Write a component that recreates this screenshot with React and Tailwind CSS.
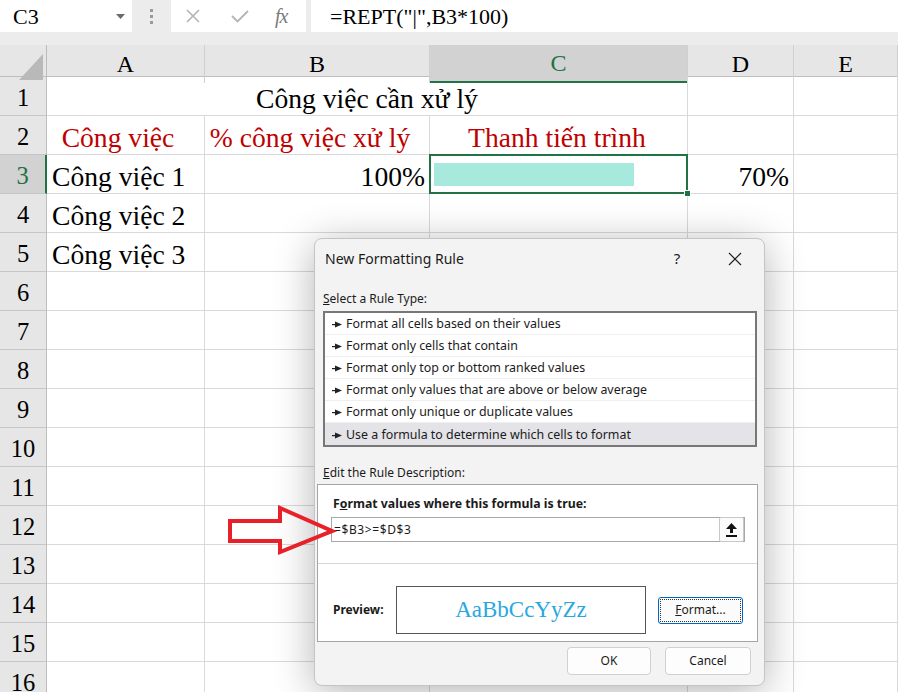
import React from "react";

const serif = { fontFamily: '"Liberation Serif", "Times New Roman", serif' };
const ui = { fontFamily: '"Noto Sans", "Open Sans", sans-serif' };

const rules = [
  "Format all cells based on their values",
  "Format only cells that contain",
  "Format only top or bottom ranked values",
  "Format only values that are above or below average",
  "Format only unique or duplicate values",
  "Use a formula to determine which cells to format",
];

const cols = ["A", "B", "C", "D", "E"];

const Pointer = () => (
  <svg width="10" height="7" viewBox="0 0 10 7" className="shrink-0">
    <rect x="0" y="3" width="4" height="1.2" fill="#222" />
    <polygon points="3,0.5 10,3.5 3,6.5" fill="#222" />
  </svg>
);

const Cell = ({ className = "", children }) => (
  <div
    className={
      "border-r border-b border-[#d9d9d9] flex items-center pt-[5px] overflow-visible whitespace-nowrap text-[27.6px] " +
      className
    }
  >
    {children}
  </div>
);

const RowHeader = ({ n, active }) => (
  <div
    className={
      "flex items-center justify-center pt-[5px] border-b border-[#c6c6c6] text-[24.5px] " +
      (active
        ? "bg-[#d2d2d2] text-[#217346] border-r-2 border-r-[#217346]"
        : "bg-[#e6e6e6] text-black border-r border-r-[#bdbdbd]")
    }
  >
    {n}
  </div>
);

function Sheet() {
  const rows = [];
  for (let r = 1; r <= 16; r++) {
    rows.push(<RowHeader key={"h" + r} n={r} active={r === 3} />);
    if (r === 1) {
      rows.push(
        <Cell key="m1" className="col-span-3 justify-center text-black">
          Công việc cần xử lý
        </Cell>
      );
      rows.push(<Cell key="d1" />);
      rows.push(<Cell key="e1" />);
    } else if (r === 2) {
      rows.push(
        <Cell key="a2" className="justify-center pr-[15px] text-[#c00000]">
          Công việc
        </Cell>
      );
      rows.push(
        <Cell key="b2" className="justify-center pr-[14px] text-[#c00000]">
          % công việc xử lý
        </Cell>
      );
      rows.push(
        <Cell key="c2" className="justify-center pr-[3px] text-[#c00000]">
          Thanh tiến trình
        </Cell>
      );
      rows.push(<Cell key="d2" />);
      rows.push(<Cell key="e2" />);
    } else if (r === 3) {
      rows.push(
        <Cell key="a3" className="pl-[5px] text-black">
          Công việc 1
        </Cell>
      );
      rows.push(
        <Cell key="b3" className="justify-end pr-[4px] text-black">
          100%
        </Cell>
      );
      rows.push(
        <div key="c3" className="relative border-r border-b border-[#d9d9d9] flex items-center pl-[4px] pt-[1px]">
          <div className="w-[200px] h-[23px] bg-[#a7e9dc]" />
          <div className="absolute -left-[1px] -top-[1px] -right-[1px] -bottom-[1px] border-2 border-[#217346]" />
          <div className="absolute -right-[4px] -bottom-[4px] w-[7px] h-[7px] bg-[#217346] border border-white" />
        </div>
      );
      rows.push(
        <Cell key="d3" className="justify-end pr-[4px] text-black">
          70%
        </Cell>
      );
      rows.push(<Cell key="e3" />);
    } else {
      const label = r === 4 ? "Công việc 2" : r === 5 ? "Công việc 3" : "";
      rows.push(
        <Cell key={"a" + r} className="pl-[5px] text-black">
          {label}
        </Cell>
      );
      for (let c = 1; c < 5; c++) rows.push(<Cell key={r + "-" + c} />);
    }
  }
  return (
    <div className="grid grid-cols-[47px_158px_225px_258px_106px_104px] auto-rows-[39px]" style={serif}>
      {rows}
    </div>
  );
}

function FormulaBar() {
  return (
    <div className="h-[45px] bg-[#ececec] flex items-start" style={serif}>
      <div className="w-[132px] h-[32px] bg-white flex items-center pl-[13px] pr-[7px] text-[22px] text-black">
        <span>C3</span>
        <svg width="9" height="5" viewBox="0 0 9 5" className="ml-auto">
          <polygon points="0,0 9,0 4.5,5" fill="#6b6b6b" />
        </svg>
      </div>
      <div className="w-[39px] h-[32px] flex items-center justify-center">
        <div className="flex flex-col gap-[3px]">
          <span className="w-[3px] h-[3px] bg-[#9a9a9a]" />
          <span className="w-[3px] h-[3px] bg-[#9a9a9a]" />
          <span className="w-[3px] h-[3px] bg-[#9a9a9a]" />
        </div>
      </div>
      <div className="w-[135px] h-[32px] bg-white flex items-center">
        <svg width="16" height="16" viewBox="0 0 16 16" className="ml-[14px]">
          <path d="M2 2 L14 14 M14 2 L2 14" stroke="#b4b4b4" strokeWidth="1.6" />
        </svg>
        <svg width="18" height="14" viewBox="0 0 18 14" className="ml-[30px]">
          <path d="M1 7 L6.5 12.5 L17 2" stroke="#b4b4b4" strokeWidth="1.8" fill="none" />
        </svg>
        <span className="ml-[26px] italic text-[20px] text-[#7a7a7a] tracking-[-1px]">fx</span>
      </div>
      <div className="ml-[5px] flex-1 h-[32px] bg-white flex items-center pl-[19px] text-[22px] text-black">
        =REPT("|",B3*100)
      </div>
    </div>
  );
}

function HeaderRow() {
  return (
    <div className="grid grid-cols-[47px_158px_225px_258px_106px_104px] h-[32px] bg-[#e6e6e6] border-b border-[#bdbdbd]" style={serif}>
      <div className="relative border-r border-[#bdbdbd]">
        <svg width="24" height="26" viewBox="0 0 24 26" className="absolute right-[3px] bottom-[3px]">
          <polygon points="24,0 24,26 0,26" fill="#b9b9b9" />
        </svg>
      </div>
      {cols.map((c) => (
        <div
          key={c}
          className={
            "flex items-center justify-center text-[24px] border-r border-[#d0d0d0] " +
            (c === "C" ? "bg-[#d2d2d2] text-[#217346] border-b-2 border-b-[#217346]" : "text-black")
          }
        >
          {c}
        </div>
      ))}
    </div>
  );
}

function Dialog() {
  return (
    <div
      className="absolute left-[314px] top-[238px] w-[451px] h-[448px] rounded-[8px] border border-[#c4c4c4] bg-[#f3f3f3] shadow-[0_6px_40px_rgba(0,0,0,0.3)] flex flex-col text-[#1b1b1b]"
      style={ui}
    >
      <div className="h-[39px] flex items-center pl-[10px] pr-[17px]">
        <span className="text-[14px]">New Formatting Rule</span>
        <span className="ml-auto w-[24px] text-center text-[15px]">?</span>
        <svg width="24" height="14" viewBox="0 0 24 14" className="ml-[34px]">
          <path d="M6 1 L18 13 M18 1 L6 13" stroke="#222" strokeWidth="1.2" />
        </svg>
      </div>
      <div className="mt-[13px] ml-[8px] h-[16px] flex items-center text-[12px]">
        <span>
          <span className="underline">S</span>elect a Rule Type:
        </span>
      </div>
      <div className="mt-[4px] ml-[8px] w-[434px] h-[136px] border-2 border-[#777] bg-white flex flex-col">
        {rules.map((t, i) => (
          <div
            key={t}
            className={
              "h-[22px] flex items-center gap-[4px] pl-[7px] pt-[2px] text-[12.4px] " +
              (i === 5 ? "bg-[#e3e3e8]" : "border-b border-[#efefef]")
            }
          >
            <Pointer />
            <span>{t}</span>
          </div>
        ))}
      </div>
      <div className="mt-[18px] ml-[8px] h-[16px] flex items-center text-[12px]">
        <span>
          <span className="underline">E</span>dit the Rule Description:
        </span>
      </div>
      <div className="mt-[3px] ml-[2px] w-[441px] h-[158px] border border-[#a5a5a5] bg-white flex flex-col">
        <div className="h-[79px] border-b border-[#d6d6d6]">
          <div className="mt-[11px] ml-[15px] h-[16px] flex items-center text-[12.3px] font-bold">
            <span>
              F<span className="underline">o</span>rmat values where this formula is true:
            </span>
          </div>
          <div className="mt-[5px] ml-[13px] w-[414px] h-[25px] border border-[#a8a8a8] flex items-center pl-[2px] text-[12px]">
            <span className="tracking-[0.6px]">=$B3&gt;=$D$3</span>
            <div className="ml-auto w-[25px] h-[25px] -my-[1px] border border-[#c8c8c8] bg-[#fbfbfb] rounded-[2px] flex items-center justify-center">
              <svg width="11" height="14" viewBox="0 0 11 14">
                <polygon points="5.5,0 11,6 7,6 7,10 4,10 4,6 0,6" fill="#111" />
                <rect x="0" y="12" width="11" height="2" fill="#111" />
              </svg>
            </div>
          </div>
        </div>
        <div className="pt-[22px] flex items-center">
          <div className="w-[78px] pl-[15px] text-[12px] font-bold">Preview:</div>
          <div
            className="w-[250px] h-[48px] border border-[#555] flex items-center justify-center text-[23px] text-[#29a8e0]"
            style={serif}
          >
            AaBbCcYyZz
          </div>
          <div className="ml-[12px] w-[85px] h-[27px] rounded-[3px] border border-[#0067c0] p-[1px]">
            <div className="w-full h-full border border-dotted border-[#333] bg-[#fbfbfb] flex items-center justify-center text-[12px]">
              <span>
                <span className="underline">F</span>ormat...
              </span>
            </div>
          </div>
        </div>
      </div>
      <div className="mt-[5px] pr-[13px] flex justify-end gap-[14px]">
        <div className="w-[84px] h-[28px] rounded-[4px] border border-[#d0d0d0] bg-[#fdfdfd] flex items-center justify-center text-[12px]">
          OK
        </div>
        <div className="w-[86px] h-[28px] rounded-[4px] border border-[#d0d0d0] bg-[#fdfdfd] flex items-center justify-center text-[12px]">
          Cancel
        </div>
      </div>
    </div>
  );
}

export default function App() {
  return (
    <div className="relative w-[898px] h-[692px] overflow-hidden bg-white">
      <FormulaBar />
      <HeaderRow />
      <Sheet />
      <Dialog />
      <svg width="110" height="50" viewBox="0 0 110 50" className="absolute left-[227px] top-[505px]">
        <polygon
          points="3,16 53,16 53,3 105,26 53,47 53,36 3,36"
          fill="none"
          stroke="#e8202a"
          strokeWidth="4"
          strokeLinejoin="miter"
        />
      </svg>
    </div>
  );
}
